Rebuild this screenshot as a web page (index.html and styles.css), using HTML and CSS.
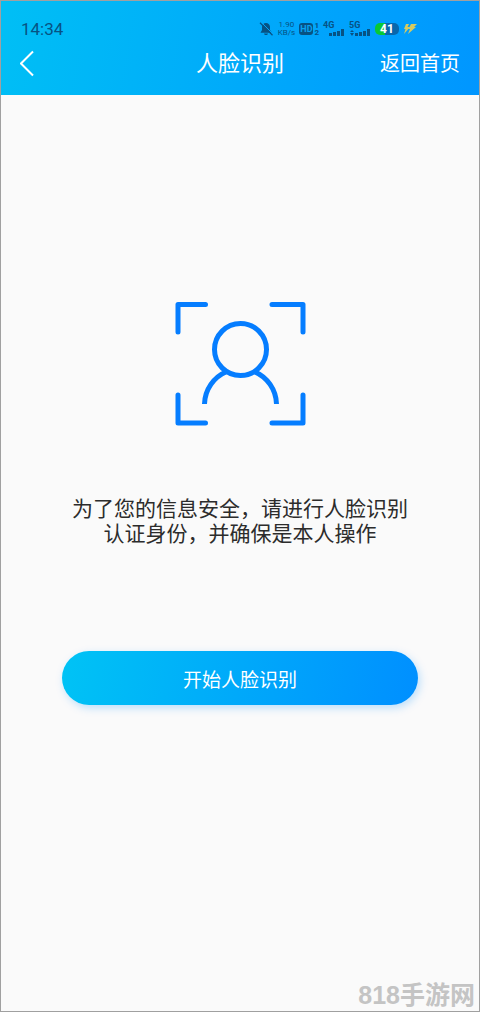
FILE: index.html
```html
<!DOCTYPE html>
<html lang="zh-CN">
<head>
<meta charset="utf-8">
<meta name="viewport" content="width=device-width, initial-scale=1">
<title>人脸识别</title>
<link rel="stylesheet" href="styles.css">
</head>
<body>
<div class="screen">
  <header class="header">
    <div class="status">
      <time class="clock">14:34</time>
      <div class="indicators">
        <svg class="bell" width="14" height="14" viewBox="0 0 14 14" aria-hidden="true">
          <path d="M7 1C4.600 1 3 2.800 3 5v3L1.500 10.800h11.500L11 8V5C11 2.800 9.400 1 7 1zM5 11.500h4c-.3 2-3.700 2-4 0z" fill="currentColor"/>
          <path d="M2.300 0.300L14 12" stroke="#03a6fc" stroke-width="1"/>
          <path d="M1 0.800L13.500 13.300" stroke="currentColor" stroke-width="1.300"/>
        </svg>
        <div class="speed"><span>1.90</span><span>KB/s</span></div>
        <div class="volte"><span class="hd">HD</span><span class="sims"><span>1</span><span>2</span></span></div>
        <div class="signal">
          <span class="net">4G</span>
          <svg width="22" height="14" viewBox="0 0 22 14" aria-hidden="true"><path d="M6 11h3v3H6zM10 10h3v4h-3zM14 9h3v5h-3zM18 7h3v7h-3z" fill="currentColor"/></svg>
        </div>
        <div class="signal">
          <span class="net">5G</span>
          <svg width="22" height="14" viewBox="0 0 22 14" aria-hidden="true"><path d="M1 10l2-2 2 2zM1 11l2 3 2-3zM6 11h3v3H6zM10 10h3v4h-3zM14 9h3v5h-3zM18 7h3v7h-3z" fill="currentColor"/></svg>
        </div>
        <div class="battery">41</div>
        <svg class="bolt" width="14" height="12" viewBox="0 0 14 12" aria-hidden="true"><path d="M3 1h3L4.500 4H7L1 11l1.500-5H1zM8 1h6l-3 3h2L5 11l2-5H5.500z" fill="#d6cb62"/></svg>
      </div>
    </div>
    <nav class="nav">
      <button class="back" type="button" aria-label="返回">
        <svg width="16" height="28" viewBox="0 0 16 28" aria-hidden="true"><path d="M13 1.500L1 13.500l12 12" fill="none" stroke="currentColor" stroke-width="2"/></svg>
      </button>
      <h1 class="title">人脸识别</h1>
      <a class="home" href="#">返回首页</a>
    </nav>
  </header>
  <main class="main">
    <svg class="face" width="132" height="126" viewBox="0 0 132 126" fill="none" stroke="#057dff" stroke-width="5" aria-hidden="true">
      <path d="M31.500 3.500H4V31M98 3.500h31V31M4 94v28h27.500M98 122h31V94" stroke-linecap="round" stroke-linejoin="round"/>
      <circle cx="66.500" cy="48.500" r="26"/>
      <path d="M30.500 103A36 36 0 0 1 53 70.500M102.500 103A36 36 0 0 0 80 70.500"/>
    </svg>
    <p class="tip">为了您的信息安全，请进行人脸识别<br>认证身份，并确保是本人操作</p>
    <button class="start" type="button">开始人脸识别</button>
  </main>
  <footer class="mark">818手游网</footer>
</div>
</body>
</html>
```
FILE: styles.css
```css
* {
  box-sizing: border-box;
}

body {
  margin: 0;
  background: #fafafa;
  font-family: Roboto, "Noto Sans CJK SC", sans-serif;
}

.screen {
  display: flex;
  flex-direction: column;
  min-height: 100vh;
  border: 1px solid #a0a0a0;
}

.header {
  padding: 18px 19px 6px;
  background: linear-gradient(100deg, #00bff5, #0096ff);
  color: #fff;
}

.status {
  display: flex;
  align-items: center;
  justify-content: space-between;
  height: 20px;
  color: #075283;
}

.clock {
  padding-left: 1px;
  font-size: 17px;
  line-height: 20px;
}

.indicators {
  display: flex;
  align-items: center;
  gap: 4px;
  margin-right: 43px;
}

.speed {
  display: flex;
  flex-direction: column;
  width: 18px;
  font-size: 8px;
  line-height: 8px;
  text-align: center;
}

.volte {
  display: flex;
  align-items: center;
  gap: 1px;
}

.hd {
  width: 14px;
  border-radius: 3px;
  background: #075283;
  color: #08a2f2;
  font-size: 9px;
  font-weight: 700;
  line-height: 12px;
  text-align: center;
}

.sims {
  display: flex;
  flex-direction: column;
  font-size: 8px;
  font-weight: 700;
  line-height: 7px;
}

.signal {
  display: grid;
}

.signal > * {
  grid-area: 1 / 1;
}

.net {
  font-size: 9px;
  font-weight: 700;
  line-height: 7px;
}

.battery {
  width: 24px;
  border-radius: 5px;
  background: linear-gradient(90deg, #08c835 40%, #0867ac 40%);
  color: #fff;
  font-size: 12px;
  font-weight: 700;
  line-height: 12px;
  text-align: center;
}

.nav {
  display: grid;
  grid-template-columns: 1fr auto 1fr;
  align-items: center;
  height: 50px;
}

.back {
  display: flex;
  justify-self: start;
  padding: 0;
  border: 0;
  background: none;
  color: #fff;
}

.title {
  margin: 0;
  font-size: 22px;
  font-weight: 400;
  line-height: 30px;
}

.home {
  justify-self: end;
  color: #fff;
  font-size: 20px;
  line-height: 30px;
  text-decoration: none;
}

.main {
  display: flex;
  flex: 1;
  flex-direction: column;
  align-items: center;
  padding: 206px 61px 0;
}

.tip {
  margin: 70px 0 0;
  color: #2c2c2c;
  font-size: 21px;
  line-height: 25px;
  text-align: center;
  white-space: nowrap;
}

.start {
  width: 100%;
  height: 54px;
  margin-top: 104px;
  padding: 0;
  border: 0;
  border-radius: 27px;
  background: linear-gradient(100deg, #00c3f5, #008fff);
  box-shadow: 2px 3px 8px #0090ff40;
  color: #fff;
  font-family: inherit;
  font-size: 19px;
}

.mark {
  padding: 0 4px 0;
  color: #c4c4c4;
  font-family: "Liberation Sans", "Noto Sans CJK SC", sans-serif;
  font-size: 25px;
  font-weight: 700;
  line-height: 32px;
  text-align: right;
}
```
